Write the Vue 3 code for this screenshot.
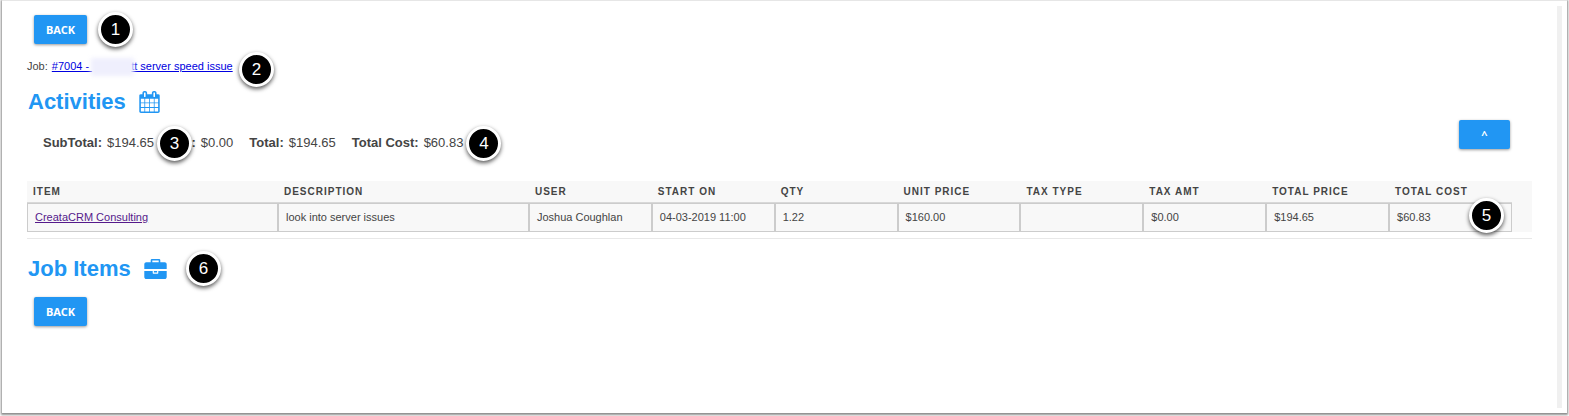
<script setup>
const totals = [
  { label: 'SubTotal:', value: '$194.65', badge: 3 },
  { label: 'Tax:', value: '$0.00' },
  { label: 'Total:', value: '$194.65' },
  { label: 'Total Cost:', value: '$60.83', badge: 4 },
]
const columns = ['Item', 'Description', 'User', 'Start On', 'Qty', 'Unit Price', 'Tax Type', 'Tax Amt', 'Total Price', 'Total Cost']
const cells = ['look into server issues', 'Joshua Coughlan', '04-03-2019 11:00', '1.22', '$160.00', '', '$0.00', '$194.65', '$60.83']
</script>

<template>
  <main class="panel">
    <div class="content">
      <div class="actions">
        <button type="button" class="btn">BACK</button>
        <span class="badge after-button">1</span>
      </div>

      <p class="job">
        <span>Job:</span>
        <a href="#job">#7004 - <span class="redacted"></span>tt server speed issue</a>
        <span class="badge after-job">2</span>
      </p>

      <h2>
        Activities
        <svg class="calendar" viewBox="64 0 1664 1792" aria-hidden="true">
          <path d="M192 1664h288v-288h-288v288zM544 1664h320v-288h-320v288zM192 1312h288v-320h-288v320zM544 1312h320v-320h-320v320zM192 928h288v-288h-288v288zM928 1664h320v-288h-320v288zM544 928h320v-288h-320v288zM1312 1664h288v-288h-288v288zM928 1312h320v-320h-320v320zM576 448v-288q0-13-9.5-22.5t-22.5-9.5h-64q-13 0-22.5 9.5t-9.5 22.5v288q0 13 9.5 22.5t22.5 9.5h64q13 0 22.5-9.5t9.5-22.5zM1312 1312h288v-320h-288v320zM928 928h320v-288h-320v288zM1312 928h288v-288h-288v288zM1344 448v-288q0-13-9.5-22.5t-22.5-9.5h-64q-13 0-22.5 9.5t-9.5 22.5v288q0 13 9.5 22.5t22.5 9.5h64q13 0 22.5-9.5t9.5-22.5zM1728 384v1280q0 52-38 90t-90 38h-1408q-52 0-90-38t-38-90v-1280q0-52 38-90t90-38h128v-96q0-66 47-113t113-47h64q66 0 113 47t47 113v96h384v-96q0-66 47-113t113-47h64q66 0 113 47t47 113v96h128q52 0 90 38t38 90z" />
        </svg>
      </h2>

      <div class="summary">
        <div class="totals">
          <span v-for="t in totals" :key="t.label" class="total">
            <b>{{ t.label }}</b>
            <span>{{ t.value }}</span>
            <span v-if="t.badge" class="badge after-total">{{ t.badge }}</span>
          </span>
        </div>
        <button type="button" class="btn toggle" aria-label="Collapse activities">^</button>
      </div>

      <div class="table-wrap">
        <table>
          <thead>
            <tr>
              <th v-for="c in columns" :key="c" scope="col">{{ c }}</th>
            </tr>
          </thead>
          <tbody>
            <tr>
              <td><a href="#item" class="visited">CreataCRM Consulting</a></td>
              <td v-for="(cell, i) in cells" :key="i">{{ cell }}</td>
            </tr>
          </tbody>
        </table>
        <span class="badge on-table">5</span>
      </div>

      <hr />

      <h2>
        Job Items
        <svg class="briefcase" viewBox="0 0 1792 1600" aria-hidden="true">
          <path d="M640 256h512v-128h-512v128zM1792 960v480q0 66-47 113t-113 47h-1472q-66 0-113-47t-47-113v-480h672v160q0 26 19 45t45 19h320q26 0 45-19t19-45v-160h672zM1024 960v128h-256v-128h256zM1792 416v384h-1792v-384q0-66 47-113t113-47h352v-160q0-40 28-68t68-28h576q40 0 68 28t28 68v160h352q66 0 113 47t47 113z" />
        </svg>
        <span class="badge after-heading">6</span>
      </h2>

      <div class="actions bottom">
        <button type="button" class="btn">BACK</button>
      </div>
    </div>
    <div class="scroll-track"></div>
  </main>
</template>

<style>
html,
body,
#app {
  height: 100%;
  margin: 0;
}
</style>

<style scoped>
* {
  box-sizing: border-box;
}

.panel {
  display: flex;
  height: calc(100vh - 3px);
  margin: 0 2px;
  border-top: 1px solid #e6e6e6;
  background: #fff;
  box-shadow: 0 1px 2px 1px rgba(0, 0, 0, 0.45);
  color: #444;
  font: 11px/16px "Liberation Sans", Arial, sans-serif;
}

.content {
  flex: 1;
  min-width: 0;
  padding: 14px 25px 0 25px;
}

.scroll-track {
  width: 5px;
  margin: 5px 5px 5px 0;
  background: #f0f0f0;
}

.actions {
  position: relative;
  display: flex;
  padding-left: 7px;
}

.btn {
  width: 53px;
  height: 29px;
  padding: 0;
  border: 0;
  border-radius: 2px;
  background: #2196f3;
  box-shadow: 0 1px 3px rgba(0, 0, 0, 0.4);
  color: #fff;
  font: 700 11px/29px "Noto Sans", "Open Sans", sans-serif;
}

.job {
  position: relative;
  display: flex;
  gap: 4px;
  margin: 14px 0 0;
}

a {
  color: #0000e0;
}

a.visited {
  color: #551a8b;
}

.redacted {
  position: relative;
  display: inline-block;
  width: 39px;
  height: 8px;
}

.redacted::after {
  content: "";
  position: absolute;
  inset: -4px -3px -6px -1px;
  background: #efeffd;
  filter: blur(2px);
}

h2 {
  position: relative;
  display: flex;
  align-items: center;
  gap: 13px;
  height: 22px;
  margin: 17px 0 0;
  padding-left: 1px;
  color: #2196f3;
  font-size: 22px;
  line-height: 24px;
}

h2 svg {
  fill: currentColor;
}

.calendar {
  width: 21px;
  height: 22px;
}

.briefcase {
  width: 23px;
  height: 20px;
}

.summary {
  display: flex;
  align-items: flex-start;
  justify-content: space-between;
  margin: 7px 22px 0 16px;
}

.totals {
  display: flex;
  gap: 16px;
  margin-top: 15px;
  font-size: 13px;
}

.total {
  position: relative;
  display: flex;
  gap: 5px;
}

.toggle {
  width: 51px;
}

.table-wrap {
  position: relative;
  margin-top: 30px;
  padding-right: 20px;
  background: #f8f8f8;
}

table {
  width: 100%;
  table-layout: fixed;
  border-collapse: separate;
  border-spacing: 0;
}

th {
  height: 22px;
  padding: 0 6px;
  border-bottom: 1px solid #d8d8d8;
  font-size: 10px;
  letter-spacing: 1px;
  text-align: left;
  text-transform: uppercase;
}

th:nth-child(-n + 2) {
  width: 16.9%;
}

td {
  height: 29px;
  padding: 0 7px 2px;
  border: 1px solid #ccc;
}

hr {
  margin: 6px 0 0;
  border: 0;
  border-top: 1px solid #e8e8e8;
}

hr + h2 {
  margin-top: 19px;
}

.bottom {
  margin-top: 17px;
}

.badge {
  position: absolute;
  top: 50%;
  width: 35px;
  height: 35px;
  margin-top: -18px;
  border: 3px solid #fff;
  border-radius: 50%;
  background: #000;
  box-shadow: 0 2px 4px rgba(0, 0, 0, 0.65);
  color: #fff;
  font-size: 17px;
  font-weight: 400;
  line-height: 29px;
  text-align: center;
  z-index: 1;
}

.after-button {
  left: 71px;
}

.after-job {
  left: 212px;
  margin-top: -14px;
}

.after-total {
  left: 100%;
  margin: -17px 0 0 3px;
}

.after-heading {
  left: 159px;
}

.on-table {
  top: 17px;
  right: 28px;
  margin-top: 0;
}
</style>
